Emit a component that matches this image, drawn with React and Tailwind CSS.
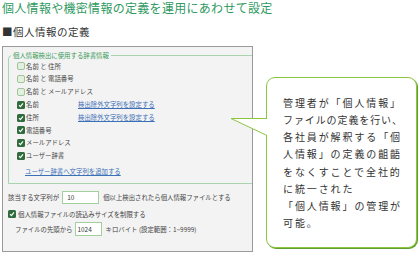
const font = { fontFamily: '"Noto Sans CJK JP", "Noto Sans", sans-serif' };

function Box({ checked }) {
  if (!checked) {
    return <span className="block w-[8px] h-[8px] rounded-[2px] border border-[#9cc59a] bg-[#e3f0df] shrink-0" />;
  }
  return (
    <span className="flex items-center justify-center w-[8px] h-[8px] rounded-[1.5px] bg-[#2f6b3c] shrink-0">
      <svg width="6" height="6" viewBox="0 0 6 6">
        <polyline points="1,3.2 2.4,4.6 5,1.4" fill="none" stroke="#ffffff" strokeWidth="1.2" />
      </svg>
    </span>
  );
}

const dictRows = [
  { label: "名前 と 住所", checked: false },
  { label: "名前 と 電話番号", checked: false },
  { label: "名前 と メールアドレス", checked: false },
  { label: "名前", checked: true, link: true },
  { label: "住所", checked: true, link: true },
  { label: "電話番号", checked: true },
  { label: "メールアドレス", checked: true },
  { label: "ユーザー辞書", checked: true },
];

export default function App() {
  return (
    <div className="relative w-[420px] h-[257px] bg-white overflow-hidden" style={font}>
      <h1 className="pl-[2px] text-[12px] leading-[15px] text-[#2f9a62] tracking-[0.3px]">
        個人情報や機密情報の定義を運用にあわせて設定
      </h1>
      <h2 className="mt-[10px] pl-[2px] text-[10.5px] leading-[14px] text-[#333333] tracking-[0.5px]">
        ■個人情報の定義
      </h2>

      <div className="ml-[2px] mt-[7px] w-[251px] h-[206px] border border-[#9a9a9a] bg-[#f3f3f3] overflow-hidden text-[6.4px] text-[#444444]">
        <fieldset className="ml-[5px] mt-[4px] mr-[-12px] border border-[#a8d4b0] rounded-tl-[4px] pb-[5px]">
          <legend className="ml-[2px] px-[2px] text-[6.4px] leading-[9px] text-[#3a9a5a]">
            個人情報検出に使用する辞書情報
          </legend>
          {dictRows.map((r) => (
            <div key={r.label} className="flex items-center h-[12.8px] pl-[8px]">
              <Box checked={r.checked} />
              <span className="ml-[1px] w-[52px] whitespace-nowrap">{r.label}</span>
              {r.link && (
                <span className="text-[#3b6fb6] underline whitespace-nowrap">検出除外文字列を設定する</span>
              )}
            </div>
          ))}
          <div className="flex items-center h-[13px] mt-[3px] pl-[16px]">
            <span className="text-[#3b6fb6] underline">ユーザー辞書へ文字列を追加する</span>
          </div>
        </fieldset>

        <div className="flex items-center mt-[7px] pl-[5px] h-[13px] whitespace-nowrap">
          <span>該当する文字列が</span>
          <span className="ml-[3px] w-[37px] h-[13px] flex items-center pl-[4px] border border-[#a3cf9f] bg-white text-[#333333]">10</span>
          <span className="ml-[4px]">個以上検出されたら個人情報ファイルとする</span>
        </div>

        <div className="flex items-center mt-[4px] pl-[5px] h-[12px] whitespace-nowrap">
          <Box checked />
          <span className="ml-[2px]">個人情報ファイルの読込みサイズを制限する</span>
        </div>

        <div className="flex items-center mt-[2px] pl-[12px] h-[14px] whitespace-nowrap">
          <span>ファイルの先頭から</span>
          <span className="ml-[2px] w-[27px] h-[14px] flex items-center pl-[2px] border border-[#a3cf9f] bg-white text-[#333333]">1024</span>
          <span className="ml-[4px]">キロバイト (設定範囲：1~9999)</span>
        </div>
      </div>

      <div className="absolute left-[266px] top-[77px] w-[151px] h-[171px] flex items-center rounded-[9px] border border-[#8cc63f] bg-white shadow-[1px_1px_0_#5f9e2f]">
        <p className="pl-[16px] text-[10px] leading-[17.2px] tracking-[1.9px] text-[#333333] whitespace-nowrap">
          管理者が「個人情報」<br />
          <span className="tracking-[0.9px]">ファイルの定義を行い、</span><br />
          各社員が解釈する「個<br />
          人情報」の定義の齟齬<br />
          をなくすことで全社的<br />
          に統一された<br />
          「個人情報」の管理が<br />
          可能。
        </p>
      </div>

      <svg className="absolute left-[230px] top-[117px]" width="40" height="21" viewBox="0 0 40 21">
        <polygon points="1,1.5 37.2,1.5 37.2,18.5" fill="#ffffff" />
        <polyline points="37,1.5 1,1.5 37,18.5" fill="none" stroke="#8cc63f" strokeWidth="1" />
      </svg>
    </div>
  );
}
